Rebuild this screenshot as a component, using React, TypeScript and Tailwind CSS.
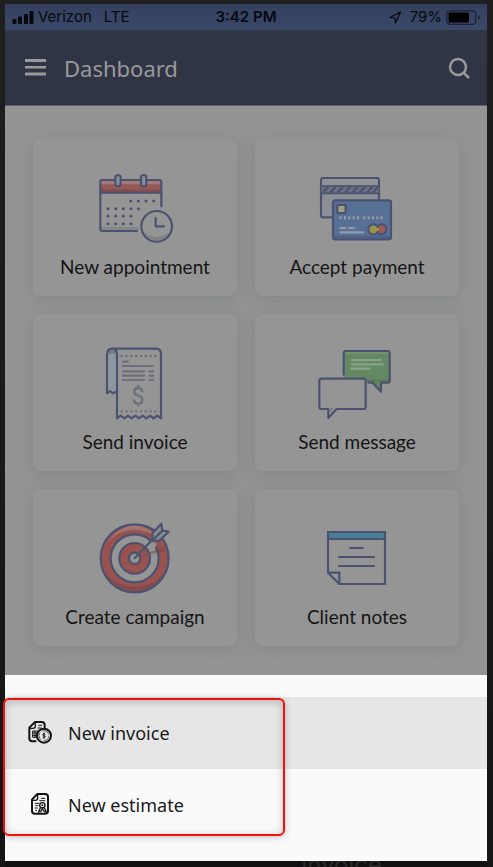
import * as React from 'react';

const INK = '#4b5270';

// Every tile drawing sits in a 240 x 240 canvas shown at 80px
function TileIcon({ viewBox, children }: { viewBox: string; children: React.ReactNode }) {
  return (
    <svg
      viewBox={viewBox}
      className="h-20 w-20"
      fill="none"
      stroke={INK}
      strokeWidth={6.5}
      strokeLinecap="round"
      strokeLinejoin="round"
      aria-hidden="true"
    >
      {children}
    </svg>
  );
}

function CalendarIcon() {
  const dots = [
    ...[152, 175, 198, 221].map(x => [x, 123]),
    ...[84, 107, 130, 153, 176].map(x => [x, 146]),
    ...[84, 107, 130, 153].map(x => [x, 168]),
    ...[84, 107, 130, 153].map(x => [x, 191]),
  ];
  return (
    <TileIcon viewBox="45 27 240 240">
      <path d="M62 63h182v34H62z" fill="#965957" stroke="none" />
      <path d="M62 63h182v10H62z" fill="#a17b7b" stroke="none" />
      <path d="M62 87h182v10H62z" fill="#884f4e" stroke="none" />
      <path d="M63 205h110" stroke="#858585" strokeWidth={8} />
      <path d="M244 139V66q0-6-6-6H67q-6 0-6 6v142q0 5 6 5h104" />
      <path d="M62 98h181" />
      <rect x="106" y="45" width="16" height="34" rx="8" fill="#8a8d98" />
      <rect x="183" y="45" width="16" height="34" rx="8" fill="#8a8d98" />
      {dots.map(([x, y]) => (
        <circle key={`${x}-${y}`} cx={x} cy={y} r="4.5" fill={INK} stroke="none" />
      ))}
      <circle cx="230" cy="199" r="46" fill="#959595" />
      <path d="M191 214a42 42 0 0 0 78 0q-12 17-39 17t-39-17z" fill="#7f8082" stroke="none" />
      <path d="M227 174v25h25" />
    </TileIcon>
  );
}

function PaymentIcon() {
  return (
    <TileIcon viewBox="51 27 240 240">
      <rect x="63" y="54" width="174" height="118" rx="7" fill="#8a9095" />
      <path d="M66 59h168v15H66z" fill="#929395" stroke="none" />
      <path d="M64 77h172v23H64z" fill="#6c7180" stroke="none" />
      {[70, 92, 114, 136, 158, 180, 202, 220].map(x => (
        <path key={x} d={`M${x} 97l15-17`} strokeWidth={7} strokeLinecap="butt" />
      ))}
      <path d="M64 78h172M64 100h172" strokeWidth={5} />
      <rect x="99" y="121" width="174" height="117" rx="7" fill="#587095" />
      <path d="M103 231h166" stroke="#4c628b" strokeWidth={7} />
      <rect x="112" y="135" width="25" height="24" rx="2" fill="#a19d83" />
      <path d="M119 173h63" stroke="#979ca7" strokeWidth={9} strokeLinecap="butt" strokeDasharray="6 7" />
      <path d="M190 173h60" stroke="#979ca7" strokeWidth={9} strokeLinecap="butt" strokeDasharray="6 7" />
      <path d="M121 204h15M147 204h15M121 217h68" stroke="#939bab" />
      <circle cx="244" cy="208" r="15" fill="#a25b5c" />
      <circle cx="220" cy="208" r="15" fill="#9a9549" />
      <path d="M222 208h11" stroke="#9a9549" strokeWidth={10} />
    </TileIcon>
  );
}

function InvoiceIcon() {
  return (
    <TileIcon viewBox="30 27 240 240">
      <path d="M66 60v115l9-7 9 7 10-6V48q-2-7-13-7-15 0-15 19z" fill="#8e979e" stroke="none" />
      <path d="M67 60q2-17 14-17 12 1 14 15-14-5-28 2z" fill="#777d84" stroke="none" />
      <path d="M81 41h132q15 0 15 17v192l-11-8-11 8-11-8-11 8-11-8-11 8-11-8-11 8-11-8-11 8-11-8-11 8V58q0-17-14-17-16 0-16 18v116l9-7 9 7 9-5" />
      <path d="M110 63h103M110 229h103" stroke="#676b79" strokeWidth={7} strokeDasharray="0 14.5" />
      <path d="M114 80h14M114 93h90M114 109h63M193 109h11M114 122h63M193 122h11M114 135h63M193 135h11" stroke="#6c707d" />
      {/* dollar sign */}
      <path
        d="M172 169q-2-10-12-10-12 0-12 11 0 9 12 12t12 13q0 11-12 11-11 0-13-10M160 153v6M160 206v5"
        stroke="#6c707d"
        strokeWidth={7}
      />
    </TileIcon>
  );
}

function MessageIcon() {
  return (
    <TileIcon viewBox="36 27 240 240">
      <path d="M116 53q0-5 6-5h126q6 0 6 6v83q0 6-6 6h-20v27l-25-27h-18v-13h-69z" fill="#648861" stroke="none" />
      <path d="M119 53h131" stroke="#7a9175" />
      <path d="M185 137h65" stroke="#587b58" />
      <path d="M116 119V54q0-6 6-6h126q6 0 6 6v83q0 6-6 6h-20v27l-25-27h-12" />
      <path d="M140 75h88M140 88h94M140 101h55" stroke="#88a385" />
      <path d="M50 131h126q6 0 6 6v79q0 6-6 6H95l-25 27v-27H49q-6 0-6-6v-79q0-6 7-6z" fill="#959595" />
      <path d="M74 219h13l-13 14z" fill="#797d82" stroke="none" />
    </TileIcon>
  );
}

function CampaignIcon() {
  return (
    <TileIcon viewBox="30 27 240 240">
      <circle cx="149" cy="145" r="102" fill="#985351" />
      <path d="M64 103q33-56 85-56t85 56q-31-43-85-43t-85 43z" fill="#a17472" stroke="none" />
      <path d="M60 187q30 55 89 55t89-55q-32 43-89 43t-89-43z" fill="#854a4c" stroke="none" />
      <circle cx="149" cy="145" r="72" fill="#959595" />
      <circle cx="149" cy="145" r="46" fill="#985351" />
      <circle cx="149" cy="145" r="17" fill="#959595" />
      <path d="M151 145l89-38 2 15z" fill="#714747" fillOpacity={0.5} stroke="none" />
      <path d="M187 105l13-12 15 8-5 13z" fill="#959595" stroke="none" />
      <path d="M149 145l75-79" />
      <path d="M203 92l-1-22 27-29 3 21 19 3-28 27z" fill="#858c93" />
      <path d="M203 90l29-28" />
    </TileIcon>
  );
}

function NotesIcon() {
  return (
    <TileIcon viewBox="36 27 240 240">
      <path d="M69 66h171v21H69z" fill="#487f96" strokeLinejoin="miter" />
      <path d="M69 87v101l34 34h137V87" strokeLinejoin="miter" />
      <path d="M69 188h34v34" strokeLinejoin="miter" />
      <path d="M76 194l23 22" strokeWidth={3} />
      <path d="M136 114h37M102 141h105M102 168h105" />
    </TileIcon>
  );
}

function InvoiceCoinIcon() {
  return (
    <svg viewBox="0 0 72 72" className="h-6 w-6" fill="none" stroke="#141414" strokeWidth={4} aria-hidden="true">
      <path d="M25 61H13q-9 0-9-9V20L21 3h20q9 0 9 9v10" strokeWidth={6} />
      <path d="M5 22h10q7 0 7-7V4" strokeWidth={4} />
      <path d="M31 13h11M28 21h13" strokeWidth={3} />
      <path d="M14 30h15v19H14zM14 36h15M14 43h15M21 30v19" strokeWidth={3} />
      <circle cx="48" cy="44" r="21" fill="#e6e6e6" strokeWidth={6} />
      <circle cx="48" cy="44" r="15" strokeWidth={2} strokeDasharray="24 8" />
      <path d="M52 40q-7-5-8 0 0 3 4 4t4 4q-2 5-8 0M48 35v18" strokeWidth={3} />
    </svg>
  );
}

function EstimateIcon() {
  return (
    <svg viewBox="0 0 72 72" className="h-6 w-6" fill="none" stroke="#141414" strokeWidth={4} aria-hidden="true">
      <path d="M28 3h23q9 0 9 9v41q0 9-9 9H21q-9 0-9-9V20z" strokeWidth={6} />
      <path d="M13 22h9q7 0 7-7V5" strokeWidth={4} />
      <path d="M39 16h13M34 23h18M20 31h13M22 38h9M20 45h9M22 52h5" strokeWidth={3} />
      <circle cx="43" cy="37" r="8" />
      <circle cx="43" cy="37" r="3" fill="#141414" stroke="none" />
      <path d="M37 44l-5 13 6-1 5-9 6 9 6 1-6-13" />
    </svg>
  );
}

const TILES = [
  { label: 'New appointment', Icon: CalendarIcon },
  { label: 'Accept payment', Icon: PaymentIcon },
  { label: 'Send invoice', Icon: InvoiceIcon },
  { label: 'Send message', Icon: MessageIcon },
  { label: 'Create campaign', Icon: CampaignIcon },
  { label: 'Client notes', Icon: NotesIcon },
];

const ACTIONS = [
  { label: 'New invoice', Icon: InvoiceCoinIcon, active: true },
  { label: 'New estimate', Icon: EstimateIcon, active: false },
];

function StatusBar() {
  return (
    <div className="grid h-[26px] grid-cols-[1fr_auto_1fr] items-center bg-linear-to-b from-[#35405e] to-[#3a4869] px-[7px] font-[Inter,sans-serif] text-[15px] leading-5 text-[#07090d]">
      <div className="flex items-center">
        <svg viewBox="0 0 22 13" className="mr-1 h-[13px] w-[22px]" fill="currentColor" aria-hidden="true">
          <rect x="0.500" y="8" width="4" height="5" rx="1" />
          <rect x="6" y="5.500" width="4" height="7.500" rx="1" />
          <rect x="12" y="3" width="4" height="10" rx="1" />
          <rect x="17.500" width="4" height="13" rx="1" />
        </svg>
        <span>Verizon</span>
        <span className="ml-3">LTE</span>
      </div>
      <span className="font-semibold">3:42 PM</span>
      <div className="flex items-center justify-end">
        <svg viewBox="0 0 14 14" className="mr-2 h-[14px] w-[14px]" fill="none" stroke="currentColor" strokeWidth={1.25} strokeLinejoin="round" aria-hidden="true">
          <path d="M12.500 2L2 7.500l5 .5.500 5z" />
        </svg>
        <span>79%</span>
        <svg viewBox="0 0 34 15" className="ml-1 h-[15px] w-[34px]" aria-hidden="true">
          <rect x="0.750" y="0.750" width="29" height="13.500" rx="3.500" fill="none" stroke="#1c2333" strokeWidth={1.25} />
          <rect x="2.500" y="2.500" width="20.500" height="10" rx="1" fill="#000" />
          <path d="M32 5v5q2-1 2-2.500T32 5z" fill="#1c2333" />
        </svg>
      </div>
    </div>
  );
}

function Header() {
  return (
    <header className="flex h-[76px] items-center border-b border-[#62646d] bg-[#2f3545] pr-4 pl-5 text-[#9a9a9a]">
      <button type="button" aria-label="Open menu">
        <svg viewBox="0 0 21 17" className="h-[17px] w-[21px]" fill="currentColor" aria-hidden="true">
          <path d="M0 0h21v3H0zM0 7h21v2.500H0zM0 13.500h21v3H0z" />
        </svg>
      </button>
      <h1 className="ml-[18px] flex-1 font-['Noto_Sans',sans-serif] text-[22px] leading-8">Dashboard</h1>
      <button type="button" aria-label="Search">
        <svg viewBox="0 0 24 24" className="h-6 w-6" fill="none" stroke="currentColor" strokeWidth={2.5} aria-hidden="true">
          <circle cx="11" cy="11" r="8" />
          <path d="M16.500 16.500L22 22" />
        </svg>
      </button>
    </header>
  );
}

export default function App() {
  return (
    <div className="bg-linear-to-b from-[#1f1f1f] to-[#151515] pt-1 pr-1.5 pl-[5px]">
      <StatusBar />
      <Header />
      <main className="grid grid-cols-2 gap-[18px] bg-[#949494] px-7 pt-[33px] pb-[29px]">
        {TILES.map(({ label, Icon }) => (
          <button
            key={label}
            type="button"
            className="flex flex-col items-center rounded-lg bg-[#959595] pt-[30px] pb-[15px] shadow-[0_3px_16px_rgba(90,98,102,0.28)]"
          >
            <Icon />
            <span className="mt-1 font-[Lato,sans-serif] text-[19px] leading-7 text-[#151515]">{label}</span>
          </button>
        ))}
      </main>
      <section className="relative bg-[#fafafa] pt-[22px] pb-5" aria-label="Create new">
        {ACTIONS.map(({ label, Icon, active }) => (
          <button
            key={label}
            type="button"
            className={`flex h-[72px] w-full items-center gap-4 pl-[23px] text-left font-['Noto_Sans',sans-serif] text-lg text-[#1a1a1a] ${active ? 'bg-[#e6e6e6]' : ''}`}
          >
            <Icon />
            <span>{label}</span>
          </button>
        ))}
        {/* highlight frame around the two actions */}
        <div className="pointer-events-none absolute top-[23px] -left-0.5 h-[138px] w-[282px] rounded-md border-2 border-[#f01010] shadow-[0_1px_6px_rgba(0,0,0,0.25),inset_0_2px_8px_rgba(0,0,0,0.22)]" />
      </section>
      {/* page left peeking out below the sheet */}
      <div className="flex h-1.5 justify-end overflow-hidden bg-[#111111] pr-[105px]">
        <span className="-mt-2 font-[Inter,sans-serif] text-2xl leading-6 text-[#2a2a2a]">invoice</span>
      </div>
    </div>
  );
}
